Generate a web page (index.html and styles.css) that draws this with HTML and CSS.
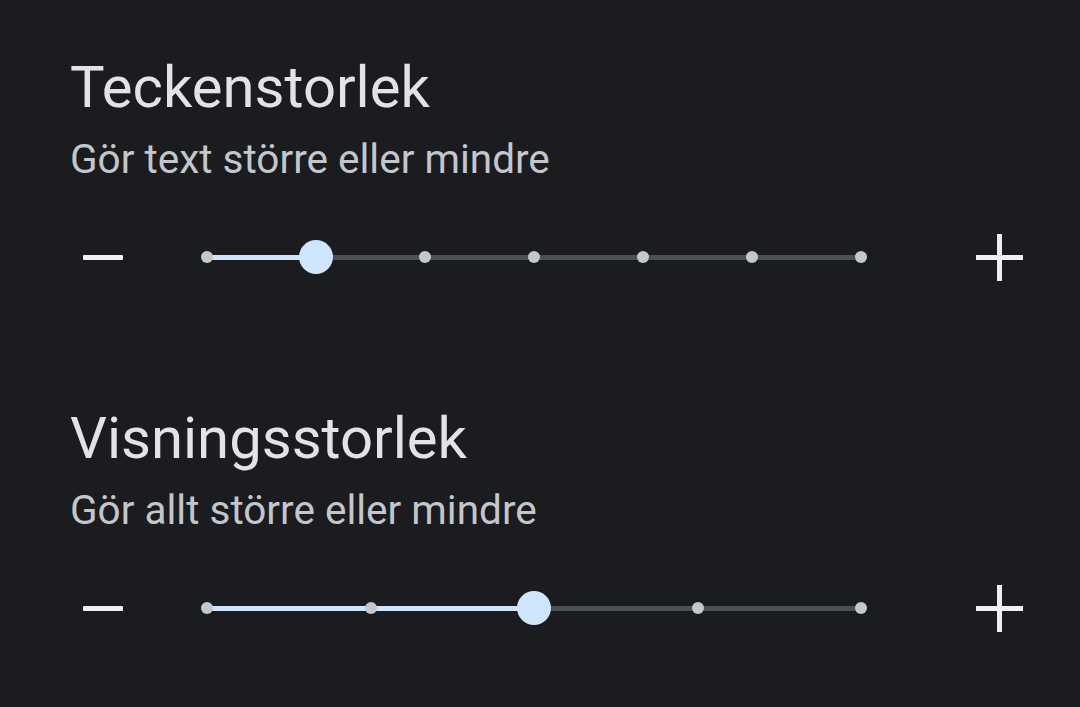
FILE: index.html
```html
<!DOCTYPE html>
<html lang="sv">
<head>
<meta charset="utf-8">
<link rel="stylesheet" href="styles.css">
</head>
<body>
<main class="page">
  <section class="setting">
    <h1 class="title">Teckenstorlek</h1>
    <p class="subtitle">Gör text större eller mindre</p>
    <div class="slider-row">
      <span class="minus" aria-label="Minska"></span>
      <div class="track">
        <div class="track-active" style="width:16.667%"></div>
        <div class="ticks">
          <span class="tick"></span><span class="tick"></span><span class="tick"></span><span class="tick"></span><span class="tick"></span><span class="tick"></span><span class="tick"></span>
        </div>
        <span class="thumb" style="left:16.667%"></span>
      </div>
      <span class="plus" aria-label="Öka"></span>
    </div>
  </section>
  <section class="setting">
    <h1 class="title">Visningsstorlek</h1>
    <p class="subtitle">Gör allt större eller mindre</p>
    <div class="slider-row">
      <span class="minus" aria-label="Minska"></span>
      <div class="track">
        <div class="track-active" style="width:50%"></div>
        <div class="ticks">
          <span class="tick"></span><span class="tick"></span><span class="tick"></span><span class="tick"></span><span class="tick"></span>
        </div>
        <span class="thumb" style="left:50%"></span>
      </div>
      <span class="plus" aria-label="Öka"></span>
    </div>
  </section>
</main>
</body>
</html>
```
FILE: styles.css
```css
* { box-sizing: border-box; }
html, body {
  margin: 0;
  padding: 0;
  background: #1a1c1f;
  width: 1080px;
  height: 707px;
  overflow: hidden;
}
.page {
  padding: 52px 0 0 70px;
  display: flex;
  flex-direction: column;
  gap: 122px;
  font-family: Roboto, "Noto Sans", sans-serif;
}
.setting {
  display: flex;
  flex-direction: column;
}
.title {
  margin: 0;
  font-size: 58px;
  line-height: 70px;
  font-weight: 400;
  color: #e3e3e7;
}
.subtitle {
  margin: 13px 0 0;
  font-size: 40.5px;
  line-height: 48px;
  color: #c3c6cb;
}
.slider-row {
  margin-top: 50px;
  height: 48px;
  display: flex;
  align-items: center;
}
.minus {
  margin-left: 13px;
  width: 40px;
  height: 5px;
  background: #eef0f4;
  border-radius: 1px;
}
.track {
  position: relative;
  margin-left: 84px;
  width: 654px;
  height: 5px;
  background: #4a5056;
}
.track-active {
  height: 100%;
  background: #cfe5fd;
}
.ticks {
  position: absolute;
  top: -3.5px;
  left: -6px;
  right: -6px;
  display: flex;
  justify-content: space-between;
}
.tick {
  width: 12px;
  height: 12px;
  border-radius: 50%;
  background: #c4c7cc;
}
.thumb {
  position: absolute;
  top: 50%;
  width: 34px;
  height: 34px;
  border-radius: 50%;
  background: #cfe5fd;
  transform: translate(-50%, -50%);
}
.plus {
  position: relative;
  margin-left: 115px;
  width: 47px;
  height: 47px;
}
.plus::before, .plus::after {
  content: "";
  position: absolute;
  background: #eef0f4;
}
.plus::before {
  left: 0;
  right: 0;
  top: 21px;
  height: 5px;
}
.plus::after {
  top: 0;
  bottom: 0;
  left: 21px;
  width: 5px;
}
```
